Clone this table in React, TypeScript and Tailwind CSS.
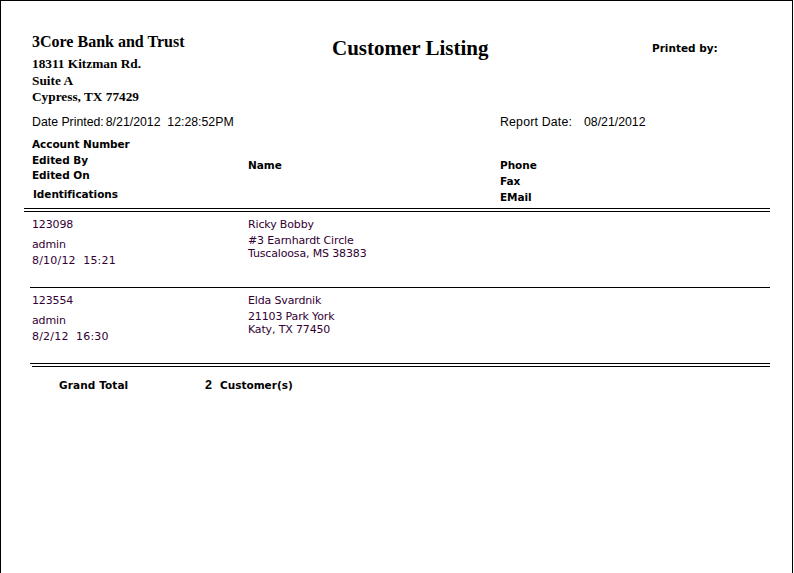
import React from "react";

const serif = { fontFamily: '"Liberation Serif", "Times New Roman", serif' };
const tah = { fontFamily: '"DejaVu Sans", Verdana, sans-serif' };
const arial = { fontFamily: '"Liberation Sans", Arial, sans-serif' };

type Rec = { acct: string; by: string; on: string; name: string; a1: string; a2: string };
const rows: Rec[] = [
  { acct: "123098", by: "admin", on: "8/10/12  15:21", name: "Ricky Bobby", a1: "#3 Earnhardt Circle", a2: "Tuscaloosa, MS 38383" },
  { acct: "123554", by: "admin", on: "8/2/12  16:30", name: "Elda Svardnik", a1: "21103 Park York", a2: "Katy, TX 77450" },
];

function DataRow({ r }: { r: Rec }) {
  return (
    <div className="flex h-[75px] pl-[31px] text-[11px] text-[#330033] tracking-[-0.15px]" style={tah}>
      <div className="w-[216px] pt-[6px]">
        <div className="h-[16px] leading-[14px] whitespace-pre">{r.acct}</div>
        <div className="h-[16px] leading-[22px] whitespace-pre">{r.by}</div>
        <div className="h-[16px] leading-[22px] whitespace-pre tracking-[0.2px]">{r.on}</div>
      </div>
      <div className="pt-[6px]">
        <div className="h-[16px] leading-[14px]">{r.name}</div>
        <div className="h-[13px] leading-[14px]">{r.a1}</div>
        <div className="h-[13px] leading-[14px]">{r.a2}</div>
      </div>
    </div>
  );
}

export default function App() {
  return (
    <div className="w-[794px] h-[573px] bg-white">
      <div className="w-[793px] h-[573px] border-l border-t border-r border-black text-black">
        {/* Header */}
        <div className="flex pl-[31px]">
          <div className="w-[300px] pt-[32px]">
            <div className="h-[18px] leading-[18px] text-[16px] font-bold" style={serif}>3Core Bank and Trust</div>
            <div className="mt-[5px] text-[13.3px] font-bold leading-[16.5px]" style={serif}>
              <div>18311 Kitzman Rd.</div>
              <div>Suite A</div>
              <div>Cypress, TX 77429</div>
            </div>
          </div>
          <div className="w-[320px] pt-[35px]">
            <div className="text-[21px] font-bold leading-[24px]" style={serif}>Customer Listing</div>
          </div>
          <div className="pt-[40px]">
            <div className="text-[10.5px] font-bold leading-[14px]" style={tah}>Printed by:</div>
          </div>
        </div>

        {/* Dates */}
        <div className="flex pl-[31px] mt-[9px] h-[14px] leading-[14px] text-[12.3px]" style={arial}>
          <div className="w-[468px] whitespace-pre">Date Printed:<span className="ml-[2px]">8/21/2012  12:28:52PM</span></div>
          <div className="w-[84px] tracking-[0.2px]">Report Date:</div>
          <div>08/21/2012</div>
        </div>

        {/* Column headers */}
        <div className="flex pl-[31px] mt-[7px] text-[10.5px] font-bold tracking-[-0.05px]" style={tah}>
          <div className="w-[216px]">
            <div className="h-[16px] leading-[16px]">Account Number</div>
            <div className="h-[15px] leading-[16px]">Edited By</div>
            <div className="h-[19px] leading-[16px]">Edited On</div>
            <div className="h-[16px] leading-[16px] pl-[1px]">Identifications</div>
          </div>
          <div className="w-[252px] pt-[21px]">
            <div className="h-[16px] leading-[16px]">Name</div>
          </div>
          <div className="pt-[21px]">
            <div className="h-[16px] leading-[16px]">Phone</div>
            <div className="h-[16px] leading-[16px]">Fax</div>
            <div className="h-[16px] leading-[16px]">EMail</div>
          </div>
        </div>

        {/* Double rule */}
        <div className="ml-[23px] w-[746px] mt-[3px] border-t border-black" />
        <div className="ml-[23px] w-[746px] mt-[2px] border-t border-black" />

        <DataRow r={rows[0]} />
        <div className="ml-[29px] w-[740px] border-t border-black" />
        <DataRow r={rows[1]} />

        <div className="ml-[29px] w-[740px] border-t border-black" />
        <div className="ml-[31px] w-[738px] mt-[2px] border-t border-black" />

        {/* Grand total */}
        <div className="flex pl-[58px] mt-[11px] h-[14px] leading-[14px] text-[10.5px] font-bold" style={tah}>
          <div className="w-[146px] tracking-[0.1px]">Grand Total</div>
          <div className="w-[15px] text-[12.5px]" style={arial}>2</div>
          <div>Customer(s)</div>
        </div>
      </div>
    </div>
  );
}
